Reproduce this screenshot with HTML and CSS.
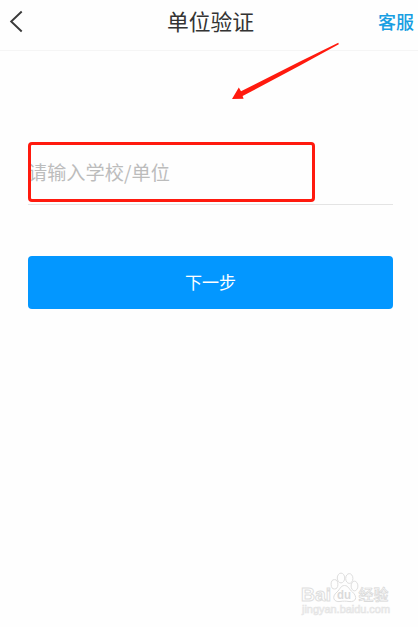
FILE: index.html
```html
<!DOCTYPE html>
<html lang="zh-CN">
<head>
    <meta charset="UTF-8">
    <meta name="viewport" content="width=device-width, initial-scale=1.0">
    <title>单位验证</title>
    <link rel="stylesheet" href="styles.css">
</head>
<body>
    <header class="header">
        <a class="back" href="#" aria-label="返回">
            <svg width="14" height="24" viewBox="0 0 14 24">
                <path d="M12.7 1.5 L2.2 11.5 L12.7 21.5" fill="none" stroke="#3a3a3a" stroke-width="1.9"/>
            </svg>
        </a>
        <h1 class="title">单位验证</h1>
        <a class="service" href="#">客服</a>
    </header>

    <main class="content">
        <div class="field">
            <input class="field-input" type="text" placeholder="请输入学校/单位">
            <div class="highlight"></div>
        </div>
        <button class="next" type="button">下一步</button>
    </main>

    <!-- Arrow pointing at the input -->
    <svg class="arrow" width="110" height="60" viewBox="230 42 110 60">
        <path d="M338.3 42.7 L338.8 44.2 L300 65.5 L242.6 96 L243.6 98.8 L232 99 L238.8 87.4 L241 91.3 L300 61.5 Z" fill="#ff1a0e"/>
    </svg>

    <!-- Watermark -->
    <svg class="watermark" width="96" height="48" viewBox="298 570 96 48">
        <g class="mark">
            <text x="301" y="600.5" font-size="19" font-weight="700" textLength="30" lengthAdjust="spacingAndGlyphs">Bai</text>
            <path d="M344.5 585.5 C340.500 585.500 340 589.500 337 592 C331 597 334 602.500 340 601.500 C343 601 346 601 349 601.500 C356 602.500 358 597 352.500 592 C349 589.500 348.500 585.500 344.500 585.500 Z"/>
            <ellipse cx="334.500" cy="584.300" rx="3.400" ry="4.700"/>
            <ellipse cx="341" cy="578" rx="3.700" ry="4.900"/>
            <ellipse cx="349.300" cy="578.500" rx="3.600" ry="4.900"/>
            <ellipse cx="354.500" cy="586" rx="3.400" ry="4.800"/>
            <text class="mark-cjk" x="358.500" y="600" font-size="15" font-weight="500">经验</text>
        </g>
        <text class="mark-du" x="337" y="599" font-size="13" font-weight="700" textLength="14" lengthAdjust="spacingAndGlyphs">du</text>
        <text class="mark-url" x="302" y="613" font-size="10" textLength="88" lengthAdjust="spacingAndGlyphs">jingyan.baidu.com</text>
    </svg>
</body>
</html>
```

FILE: styles.css
```css
* {
    margin: 0;
    padding: 0;
    box-sizing: border-box;
}

body {
    position: relative;
    min-height: 627px;
    background-color: #fefefe;
    font-family: "Noto Sans CJK SC", sans-serif;
    overflow: hidden;
}

a {
    text-decoration: none;
}

/* Header */
.header {
    display: grid;
    grid-template-columns: 80px 1fr 80px;
    align-items: center;
    height: 51px;
    padding: 0 4px 7px 9px;
    border-bottom: 1px solid #f5f5f5;
}

.back svg {
    display: block;
}

.title {
    padding: 0 2px 2px 0;
    color: #333;
    font-size: 21.8px;
    font-weight: 400;
    line-height: 32px;
    text-align: center;
}

.service {
    padding-bottom: 2px;
    color: #189ee2;
    font-size: 18px;
    font-weight: 500;
    line-height: 28px;
    text-align: right;
}

/* Form */
.content {
    padding: 91px 25px 0 28px;
}

.field {
    position: relative;
    height: 63px;
    border-bottom: 1px solid #e4e4e4;
}

.field-input {
    display: block;
    width: 100%;
    height: 60px;
    border: none;
    background: transparent;
    font-family: inherit;
    font-size: 19.2px;
    outline: none;
}

.field-input::placeholder {
    color: #bcbcbc;
}

.highlight {
    position: absolute;
    top: 0;
    left: 0;
    width: 287px;
    height: 60px;
    border: 3px solid #ff1a0e;
    border-radius: 4px;
}

.next {
    display: block;
    width: 100%;
    height: 53px;
    margin-top: 51px;
    padding-bottom: 3px;
    border: none;
    border-radius: 4px;
    background-color: #0397ff;
    color: #fff;
    font-family: inherit;
    font-size: 17px;
}

.arrow {
    position: absolute;
    top: 42px;
    left: 230px;
}

/* Watermark */
.watermark {
    position: absolute;
    top: 570px;
    left: 298px;
    font-family: "Liberation Sans", "Noto Sans CJK SC", sans-serif;
}

.mark {
    fill: #fefefe;
    stroke: #dedede;
    stroke-width: 1;
}

.mark-cjk {
    fill: #f6f6f6;
    stroke: #d6d6d6;
    stroke-width: 0.6;
}

.mark-du {
    fill: #dadada;
}

.mark-url {
    fill: #f8f8f8;
    stroke: #e4e4e4;
    stroke-width: 0.6;
}
```
